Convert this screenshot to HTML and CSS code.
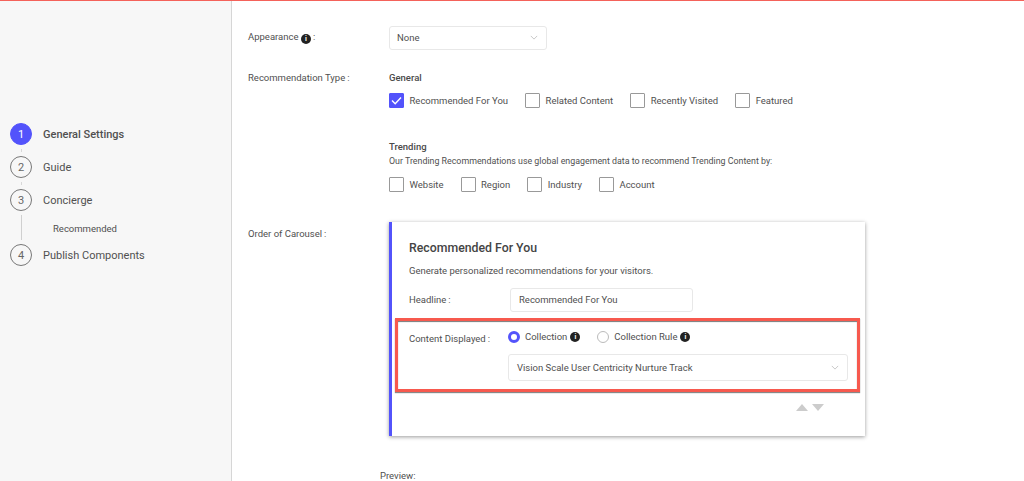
FILE: index.html

```html
<!DOCTYPE html>
<html lang="en">
<head>
  <meta charset="UTF-8">
  <title>General Settings</title>
  <link rel="stylesheet" href="styles.css">
</head>
<body>
  <div class="page">
    <aside class="sidebar">
      <div class="step active"><span class="num">1</span><span class="step-name">General Settings</span></div>
      <div class="link short"></div>
      <div class="step"><span class="num">2</span><span class="step-name">Guide</span></div>
      <div class="link short"></div>
      <div class="step"><span class="num">3</span><span class="step-name">Concierge</span></div>
      <div class="substep"><div class="link tall"></div><span>Recommended</span></div>
      <div class="step"><span class="num">4</span><span class="step-name">Publish Components</span></div>
    </aside>

    <main class="content">
      <div class="row row-appearance">
        <div class="label">Appearance <span class="info">i</span><span class="colon">:</span></div>
        <div class="select select-small"><span>None</span>
          <svg class="chev" viewBox="0 0 10 6"><path d="M1 1l4 4 4-4"/></svg>
        </div>
      </div>

      <div class="row row-type">
        <div class="label">Recommendation Type<span class="colon">:</span></div>
        <div>
          <div class="group-title">General</div>
          <div class="checks">
            <label class="check"><span class="box on"><svg viewBox="0 0 15 15"><path d="M3 7.5l3.2 3.2L12 4.5"/></svg></span>Recommended For You</label>
            <label class="check"><span class="box"></span>Related Content</label>
            <label class="check"><span class="box"></span>Recently Visited</label>
            <label class="check"><span class="box"></span>Featured</label>
          </div>
          <div class="group-title trending">Trending</div>
          <div class="group-desc">Our Trending Recommendations use global engagement data to recommend Trending Content by:</div>
          <div class="checks checks-trending">
            <label class="check"><span class="box"></span>Website</label>
            <label class="check"><span class="box"></span>Region</label>
            <label class="check"><span class="box"></span>Industry</label>
            <label class="check"><span class="box"></span>Account</label>
          </div>
        </div>
      </div>

      <div class="row row-order">
        <div class="label">Order of Carousel<span class="colon">:</span></div>
        <div class="card">
          <h3>Recommended For You</h3>
          <p>Generate personalized recommendations for your visitors.</p>
          <div class="headline">
            <div class="card-label">Headline<span class="colon">:</span></div>
            <div class="text-input">Recommended For You</div>
          </div>
          <div class="highlight">
            <div class="card-label">Content Displayed<span class="colon">:</span></div>
            <div class="displayed">
              <div class="radios">
                <label class="radio"><span class="dot on"></span>Collection <span class="info">i</span></label>
                <label class="radio"><span class="dot"></span>Collection Rule <span class="info">i</span></label>
              </div>
              <div class="select select-wide"><span>Vision Scale User Centricity Nurture Track</span>
                <svg class="chev" viewBox="0 0 10 6"><path d="M1 1l4 4 4-4"/></svg>
              </div>
            </div>
          </div>
          <div class="arrows"><span class="up"></span><span class="down"></span></div>
        </div>
      </div>

      <div class="preview">Preview:</div>
    </main>
  </div>
</body>
</html>
```

FILE: styles.css

```css
* {
  box-sizing: border-box;
}

html, body {
  height: 481px;
  margin: 0;
  overflow: hidden;
}

body {
  font-family: Roboto, 'Liberation Sans', sans-serif;
  font-size: 9.5px;
  color: #505050;
  background: #fff;
  border-top: 1px solid #f4625a;
}

.page {
  display: flex;
  height: 480px;
}

/* left steps */
.sidebar {
  width: 232px;
  flex: none;
  background: #f7f7f7;
  border-right: 1px solid #d6d6d6;
  padding: 122px 0 0 10px;
}

.step {
  display: flex;
  align-items: center;
  gap: 11px;
  height: 22px;
  font-size: 11px;
}

.num {
  width: 22px;
  height: 22px;
  border: 1px solid #777;
  border-radius: 50%;
  display: flex;
  align-items: center;
  justify-content: center;
  font-size: 11px;
  color: #666;
}

.step.active .num {
  background: #5353fb;
  border-color: #5353fb;
  color: #fff;
}

.step.active .step-name {
  font-weight: 500;
}

.link {
  width: 1px;
  background: #d0d0d0;
  margin-left: 11px;
}

.link.short {
  height: 11px;
  background: linear-gradient(#f7f7f7 4px, #d8d8d8 4px, #d8d8d8 7px, #f7f7f7 7px);
}

.substep {
  display: flex;
  height: 33px;
  padding: 4px 0;
  align-items: center;
}

.substep span {
  padding-top: 1px;
}

.link.tall {
  height: 25px;
  margin-right: 31px;
}

/* form rows */
.content {
  flex: 1;
  padding: 25px 0 0 16px;
}

.row {
  display: flex;
}

.label {
  width: 141px;
  flex: none;
}

.colon {
  margin-left: 2px;
}

.row-appearance .label {
  padding-top: 5px;
}

.row-type {
  margin-top: 22px;
}

.row-order {
  margin-top: 36px;
}

.info {
  display: inline-flex;
  width: 10px;
  height: 10px;
  border-radius: 50%;
  background: #222;
  color: #fff;
  font-size: 7px;
  font-weight: 700;
  align-items: center;
  justify-content: center;
  vertical-align: -1px;
}

.select {
  display: flex;
  align-items: center;
  justify-content: space-between;
  background: #fff;
  border: 1px solid #e8e8e8;
  border-radius: 3px;
}

.select-small {
  width: 158px;
  height: 24px;
  padding: 0 8px 1px 7px;
}

.select-wide {
  width: 340px;
  height: 27px;
  padding: 0 8px;
}

.chev {
  width: 8px;
  height: 5px;
  fill: none;
  stroke: #bbb;
  stroke-width: 1;
}

.group-title {
  font-weight: 500;
  color: #4a4a4a;
  line-height: 12px;
}

.group-title.trending {
  margin-top: 33px;
}

.group-desc {
  font-size: 8.85px;
  line-height: 12px;
  margin-top: 2px;
}

.checks {
  display: flex;
  gap: 17px;
  margin-top: 9px;
}

.checks-trending {
  margin-top: 10px;
}

.check {
  display: flex;
  align-items: center;
  gap: 5.5px;
}

.box {
  width: 15px;
  height: 15px;
  border: 1px solid #999;
  border-radius: 1px;
  background: #fff;
  display: block;
}

.box.on {
  background: #5353fb;
  border-color: #5353fb;
}

.box svg {
  display: block;
  fill: none;
  stroke: #fff;
  stroke-width: 1.4;
  margin: -1px;
}

/* carousel card */
.card {
  width: 476px;
  height: 214px;
  border-left: 3px solid #5353fb;
  background: #fff;
  box-shadow: 0 1px 4px rgba(0, 0, 0, 0.4);
  padding: 19px 0 0 17px;
  margin-top: -6px;
}

.card h3 {
  margin: 0;
  font-size: 12.3px;
  font-weight: 500;
  line-height: 14px;
  color: #444;
}

.card p {
  margin: 10px 0 0;
  line-height: 12px;
}

.headline {
  display: flex;
  margin-top: 11px;
  align-items: center;
}

.headline .card-label {
  width: 101px;
  padding-bottom: 2px;
}

.card-label {
  width: 99px;
  flex: none;
}

.text-input {
  width: 183px;
  height: 24px;
  line-height: 22px;
  border: 1px solid #e8e8e8;
  border-radius: 3px;
  padding-left: 8px;
}

.highlight {
  display: flex;
  width: 465px;
  height: 74px;
  margin: 6px 0 0 -14px;
  padding: 8px 0 0 11px;
  border: 3px solid #f7594e;
  box-shadow: inset 0 1px 1px #777, 0 1px 1px #888;
}

.highlight .card-label {
  padding-top: 4px;
}

.radios {
  display: flex;
  gap: 17px;
  height: 15px;
  align-items: center;
  margin-bottom: 10px;
}

.radio {
  display: flex;
  align-items: center;
  gap: 5px;
}

.radio .info {
  margin-left: -2px;
}

.dot {
  width: 12px;
  height: 12px;
  border: 1px solid #bbb;
  border-radius: 50%;
}

.dot.on {
  border: 3px solid #5353fb;
}

.arrows {
  display: flex;
  gap: 4px;
  margin: 12px 0 0 387px;
}

.up, .down {
  border-left: 6px solid transparent;
  border-right: 6px solid transparent;
}

.up {
  border-bottom: 7px solid #ccc;
}

.down {
  border-top: 7px solid #ccc;
}

.preview {
  margin: 34px 0 0 132px;
}
```
